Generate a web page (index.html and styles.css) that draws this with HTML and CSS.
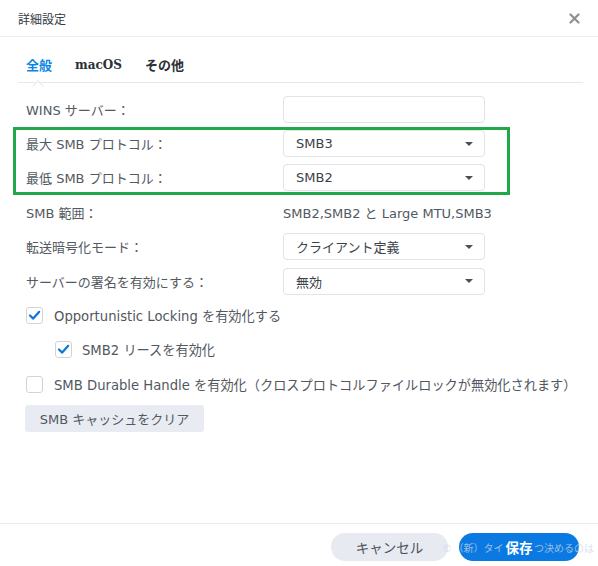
FILE: index.html
```html
<!DOCTYPE html>
<html lang="ja">
<head>
<meta charset="utf-8">
<link rel="stylesheet" href="styles.css">
</head>
<body>
<div class="dialog">
  <div class="header">
    <span class="title">詳細設定</span>
    <svg class="close" width="11" height="11" viewBox="0 0 11 11"><path d="M1.5 1.5 L9.5 9.5 M9.5 1.5 L1.5 9.5" stroke="#8b9098" stroke-width="2.2" stroke-linecap="round"/></svg>
  </div>
  <div class="tabs">
    <span class="tab active">全般</span>
    <span class="tab latin">macOS</span>
    <span class="tab">その他</span>
  </div>
  <div class="form">
    <div class="row"><span class="label">WINS サーバー：</span><div class="input"></div></div>
    <div class="row"><span class="label">最大 SMB プロトコル：</span><div class="select"><span>SMB3</span><i class="arrow"></i></div></div>
    <div class="row"><span class="label">最低 SMB プロトコル：</span><div class="select"><span>SMB2</span><i class="arrow"></i></div></div>
    <div class="row"><span class="label">SMB 範囲：</span><span class="value">SMB2,SMB2 と Large MTU,SMB3</span></div>
    <div class="row"><span class="label">転送暗号化モード：</span><div class="select"><span>クライアント定義</span><i class="arrow"></i></div></div>
    <div class="row"><span class="label">サーバーの署名を有効にする：</span><div class="select"><span>無効</span><i class="arrow"></i></div></div>
    <div class="row check"><span class="box"><svg width="15" height="15" viewBox="0 0 15 15"><path d="M3 7.5 L6.2 10.6 L12.2 3.8" fill="none" stroke="#0b78d8" stroke-width="2.2" stroke-linecap="round" stroke-linejoin="round"/></svg></span><span class="ctext">Opportunistic Locking を有効化する</span></div>
    <div class="row check sub"><span class="box"><svg width="15" height="15" viewBox="0 0 15 15"><path d="M3 7.5 L6.2 10.6 L12.2 3.8" fill="none" stroke="#0b78d8" stroke-width="2.2" stroke-linecap="round" stroke-linejoin="round"/></svg></span><span class="ctext">SMB2 リースを有効化</span></div>
    <div class="row check"><span class="box"></span><span class="ctext">SMB Durable Handle を有効化（クロスプロトコルファイルロックが無効化されます）</span></div>
    <div class="row"><button class="plain">SMB キャッシュをクリア</button></div>
  </div>
  <div class="spacer"></div>
  <div class="footer">
    <button class="pill cancel">キャンセル</button>
    <button class="pill save"><span class="save-label">保存</span></button>
    <span class="watermark wm1">© （新）タイ</span>
    <span class="watermark wm2">つ決めるのは</span>
  </div>
  <div class="highlight"></div>
</div>
</body>
</html>
```
FILE: styles.css
```css
html, body {
  margin: 0;
  padding: 0;
  background: #ffffff;
}
body {
  font-family: "DejaVu Sans", "Noto Sans CJK JP", sans-serif;
  font-size: 13px;
  color: #52585f;
}
.dialog {
  position: relative;
  width: 598px;
  height: 566px;
  display: flex;
  flex-direction: column;
  overflow: hidden;
}
.header {
  height: 37px;
  border-bottom: 1px solid #eceef1;
  display: flex;
  align-items: center;
  justify-content: space-between;
  padding: 0 18px 0 18px;
  box-sizing: border-box;
}
.title {
  font-family: "Noto Sans CJK JP", sans-serif;
  font-size: 12px;
  color: #333a42;
}
.tabs {
  margin: 0 15px 0 18px;
  height: 46px;
  border-bottom: 1px solid #e6e8ec;
  box-sizing: border-box;
  display: flex;
  align-items: center;
  gap: 23px;
  padding: 10px 0 0 8px;
}
.tab {
  position: relative;
  font-family: "Noto Sans CJK JP", sans-serif;
  font-weight: 700;
  font-size: 13px;
  color: #2c3137;
}
.tab.latin {
  font-family: "DejaVu Serif", serif;
  font-size: 12px;
}
.tab.active {
  color: #0a86e3;
}
.tab.active::after {
  content: "";
  position: absolute;
  left: 8px;
  bottom: -16px;
  width: 7px;
  height: 7px;
  background: #ffffff;
  border-left: 1px solid #e6e8ec;
  border-top: 1px solid #e6e8ec;
  transform: rotate(45deg);
}
.form {
  padding: 9px 0 0 26px;
  display: flex;
  flex-direction: column;
}
.row {
  height: 34.4px;
  display: flex;
  align-items: center;
}
.label {
  width: 257px;
  flex: none;
  font-size: 13px;
  color: #535961;
}
.label, .ctext, .value, .select span, .plain, .pill {
  font-family: "DejaVu Sans", "Noto Sans CJK JP", sans-serif;
}
.value {
  font-size: 13px;
  color: #52585f;
}
.input, .select {
  width: 202px;
  height: 27px;
  box-sizing: border-box;
  border: 1px solid #e0e3e8;
  border-radius: 4px;
  background: #ffffff;
}
.select {
  display: flex;
  align-items: center;
  justify-content: space-between;
  padding: 0 11px 0 12px;
  font-size: 13px;
  color: #3c4249;
}
.arrow {
  width: 0;
  height: 0;
  border-left: 4.5px solid transparent;
  border-right: 4.5px solid transparent;
  border-top: 4.5px solid #4a4f56;
}
.check .box {
  width: 17px;
  height: 17px;
  box-sizing: border-box;
  border: 1px solid #cfd4db;
  border-radius: 3px;
  display: flex;
  align-items: center;
  justify-content: center;
  margin-right: 11px;
  background: #fff;
}
.check.sub {
  padding-left: 29px;
}
.check.sub .box {
  margin-right: 10px;
}
.ctext {
  font-size: 13.2px;
  color: #52585f;
  white-space: nowrap;
}
.plain {
  height: 27px;
  width: 179px;
  margin-left: -1px;
  border: none;
  border-radius: 3px;
  background: #e8ecf2;
  color: #52585f;
  font-size: 13px;
  padding: 0;
}
.spacer {
  flex: 1;
}
.footer {
  position: relative;
  height: 43px;
  border-top: 1px solid #e8eaee;
  box-sizing: border-box;
  display: flex;
  justify-content: flex-end;
  gap: 11px;
  padding: 9px 19px 0 0;
}
.pill {
  height: 28px;
  border: none;
  border-radius: 14px;
  font-size: 13.5px;
  padding: 0;
}
.cancel {
  width: 117px;
  background: #e7ebf1;
  color: #4c525a;
}
.save {
  width: 120px;
  background: #0a7ae2;
  color: #ffffff;
  font-weight: 700;
  position: relative;
}
.save-label {
  position: relative;
  z-index: 2;
  font-family: "Noto Sans CJK JP", sans-serif;
}
.watermark {
  position: absolute;
  top: 16px;
  z-index: 1;
  font-family: "Noto Sans CJK JP", sans-serif;
  font-size: 10px;
  color: rgba(205, 214, 228, 0.75);
  white-space: nowrap;
}
.wm1 {
  left: 443px;
}
.wm2 {
  left: 534px;
}
.highlight {
  position: absolute;
  left: 13px;
  top: 127px;
  width: 497px;
  height: 68px;
  box-sizing: border-box;
  border: 3px solid #20a84a;
}
```
